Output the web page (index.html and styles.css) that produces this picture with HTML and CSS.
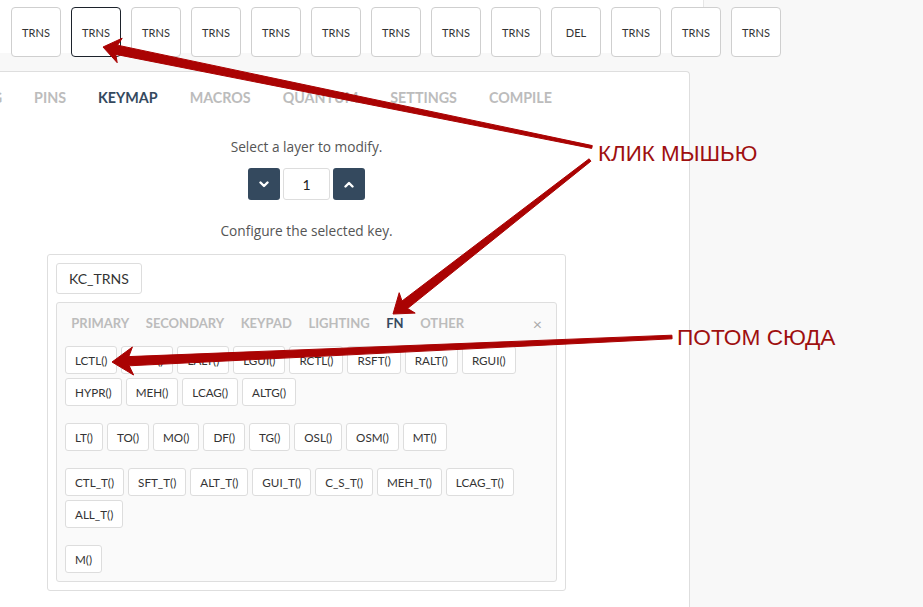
FILE: index.html
```html
<!DOCTYPE html>
<html lang="ru">

<head>
    <meta charset="UTF-8">
    <meta name="viewport" content="width=device-width, initial-scale=1.0">
    <title>Keymap</title>
    <link rel="stylesheet" href="styles.css">
</head>

<body>
    <!-- клавиатура -->
    <div class="keyboard">
        <div class="key">TRNS</div>
        <div class="key selected">TRNS</div>
        <div class="key">TRNS</div>
        <div class="key">TRNS</div>
        <div class="key">TRNS</div>
        <div class="key">TRNS</div>
        <div class="key">TRNS</div>
        <div class="key">TRNS</div>
        <div class="key">TRNS</div>
        <div class="key">DEL</div>
        <div class="key">TRNS</div>
        <div class="key">TRNS</div>
        <div class="key">TRNS</div>
    </div>

    <div class="panel">
        <ul class="tabs">
            <li>Wiring</li>
            <li>Pins</li>
            <li class="on">Keymap</li>
            <li>Macros</li>
            <li>Quantum</li>
            <li>Settings</li>
            <li>Compile</li>
        </ul>

        <div class="keymap">
            <p class="hint">Select a layer to modify.</p>
            <div class="layer-picker">
                <button type="button" class="btn-step">
                    <svg width="10" height="7" viewBox="0 0 10 7"><polyline points="1.5,1.5 5,5 8.5,1.5" /></svg>
                </button>
                <input class="layer-input" type="text" value="1">
                <button type="button" class="btn-step">
                    <svg width="10" height="7" viewBox="0 0 10 7"><polyline points="1.5,5.5 5,2 8.5,5.5" /></svg>
                </button>
            </div>
            <p class="hint hint-key">Configure the selected key.</p>

            <div class="key-editor">
                <div class="key-code">KC_TRNS</div>
                <div class="key-picker">
                    <div class="picker-tabs">
                        <span>Primary</span>
                        <span>Secondary</span>
                        <span>Keypad</span>
                        <span>Lighting</span>
                        <span class="on">Fn</span>
                        <span>Other</span>
                        <span class="close">&times;</span>
                    </div>
                    <div class="group">
                        <button type="button">LCTL()</button>
                        <button type="button">LSFT()</button>
                        <button type="button">LALT()</button>
                        <button type="button">LGUI()</button>
                        <button type="button">RCTL()</button>
                        <button type="button">RSFT()</button>
                        <button type="button">RALT()</button>
                        <button type="button">RGUI()</button>
                        <button type="button">HYPR()</button>
                        <button type="button">MEH()</button>
                        <button type="button">LCAG()</button>
                        <button type="button">ALTG()</button>
                    </div>
                    <div class="group">
                        <button type="button">LT()</button>
                        <button type="button">TO()</button>
                        <button type="button">MO()</button>
                        <button type="button">DF()</button>
                        <button type="button">TG()</button>
                        <button type="button">OSL()</button>
                        <button type="button">OSM()</button>
                        <button type="button">MT()</button>
                    </div>
                    <div class="group">
                        <button type="button">CTL_T()</button>
                        <button type="button">SFT_T()</button>
                        <button type="button">ALT_T()</button>
                        <button type="button">GUI_T()</button>
                        <button type="button">C_S_T()</button>
                        <button type="button">MEH_T()</button>
                        <button type="button">LCAG_T()</button>
                        <button type="button">ALL_T()</button>
                    </div>
                    <div class="group">
                        <button type="button">M()</button>
                    </div>
                </div>
            </div>
        </div>
    </div>

    <!-- стрелки поверх скриншота -->
    <svg class="arrows" width="923" height="607" viewBox="0 0 923 607">
        <polygon points="103,47 122.2,38.2 117.6,45.2 592.3,145.6 591.7,148.4 115.8,54.4 117.2,62.7" />
        <polygon points="393,314 415.2,313.1 407.6,308.5 590.9,161.2 589.1,158.8 402,301 399.2,292.7" />
        <polygon points="112,362 133.6,375 129.2,365.8 672.1,338.8 671.9,335.2 128.8,356.6 132.4,347" />
    </svg>
    <div class="note note-click">КЛИК МЫШЬЮ</div>
    <div class="note note-then">ПОТОМ СЮДА</div>
</body>

</html>
```

FILE: styles.css
```css
html,
body {
    margin: 0;
    height: 607px;
    overflow: hidden;
}

body {
    position: relative;
    background: #f8f8f8;
    font-family: Lato, "Noto Sans", sans-serif;
    color: #333;
}

button {
    cursor: pointer;
    font-family: inherit;
}

/* клавиатура */
.keyboard {
    display: flex;
    gap: 10px;
    width: 704px;
    height: 53px;
    box-sizing: border-box;
    padding: 7px 0 0 11px;
    background: #fff;
    border-right: 1px solid #e6e6e6;
}

.key {
    flex: none;
    display: flex;
    align-items: center;
    justify-content: center;
    width: 50px;
    height: 50px;
    box-sizing: border-box;
    border: 1px solid #cfcfcf;
    border-radius: 4px;
    background: #fff;
    font-size: 11px;
    color: #333;
}

.key.selected {
    border-color: #1c222b;
}

/* панель */
.panel {
    width: 767px;
    height: 536px;
    box-sizing: border-box;
    margin: 18px 0 0 -77px;
    background: #fff;
    border: 1px solid #dedede;
    border-bottom: 0;
    border-radius: 4px 4px 0 0;
}

.tabs {
    display: flex;
    align-items: center;
    height: 50px;
    margin: 0;
    padding: 0 0 0 8px;
    list-style: none;
}

.tabs li {
    padding: 0 16px;
    font-size: 14.3px;
    font-weight: 700;
    text-transform: uppercase;
    color: #bcbcbc;
}

.tabs li.on {
    color: #34495e;
}

.keymap {
    text-align: center;
}

.hint {
    margin: 16px 0 0;
    font-family: "Open Sans", Lato, sans-serif;
    font-size: 13.7px;
    line-height: 18px;
    color: #555;
}

.hint-key {
    margin-top: 22px;
}

.layer-picker {
    display: flex;
    justify-content: center;
    gap: 3px;
    margin-top: 12px;
}

.btn-step {
    display: flex;
    align-items: center;
    justify-content: center;
    width: 32px;
    height: 32px;
    padding: 0;
    border: none;
    border-radius: 3px;
    background: #34495e;
}

.btn-step svg polyline {
    fill: none;
    stroke: #fff;
    stroke-width: 2.4;
    stroke-linecap: round;
    stroke-linejoin: round;
}

.layer-input {
    width: 47px;
    height: 32px;
    box-sizing: border-box;
    border: 1px solid #ddd;
    border-radius: 3px;
    text-align: center;
    font-family: inherit;
    font-size: 14px;
    color: #222;
}

/* выбор кода клавиши */
.key-editor {
    width: 519px;
    box-sizing: border-box;
    margin: 14px auto 0;
    padding: 8px;
    border: 1px solid #dedede;
    border-radius: 3px;
    text-align: left;
}

.key-code {
    width: max-content;
    height: 31px;
    box-sizing: border-box;
    padding: 0 12px;
    line-height: 29px;
    border: 1px solid #ddd;
    border-radius: 3px;
    font-size: 14px;
    color: #333;
}

.key-picker {
    margin-top: 8px;
    padding: 0 8px 8px;
    background: #fafafa;
    border: 1px solid #dedede;
    border-radius: 3px;
}

.picker-tabs {
    display: flex;
    align-items: center;
    height: 40px;
    margin-left: -2px;
}

.picker-tabs span {
    padding: 0 8.3px;
    font-size: 13px;
    font-weight: 700;
    text-transform: uppercase;
    color: #bcbcbc;
}

.picker-tabs span.on {
    color: #34495e;
}

.picker-tabs .close {
    margin-left: auto;
    padding: 0 6px;
    font-size: 16px;
    font-weight: 400;
    color: #aaa;
}

.group {
    display: flex;
    flex-wrap: wrap;
    gap: 4px;
    margin-top: 17px;
}

.picker-tabs + .group {
    margin-top: 3px;
}

.group button {
    height: 28px;
    padding: 0 9px;
    border: 1px solid #ddd;
    border-radius: 3px;
    background: #fff;
    font-size: 11.65px;
    color: #333;
}

/* пометки */
.arrows {
    position: absolute;
    top: 0;
    left: 0;
    pointer-events: none;
}

.arrows polygon {
    fill: #aa0303;
    stroke: #aa0303;
    stroke-width: 1;
    stroke-linejoin: round;
}

.note {
    position: absolute;
    font-family: "Liberation Sans", Arial, sans-serif;
    color: #9e1010;
    white-space: nowrap;
    text-shadow: 0 0 1px #fff;
}

.note-click {
    left: 598px;
    top: 142px;
    font-size: 22.4px;
    line-height: 23px;
}

.note-then {
    left: 677px;
    top: 326px;
    font-size: 22.7px;
    line-height: 22px;
}
```
